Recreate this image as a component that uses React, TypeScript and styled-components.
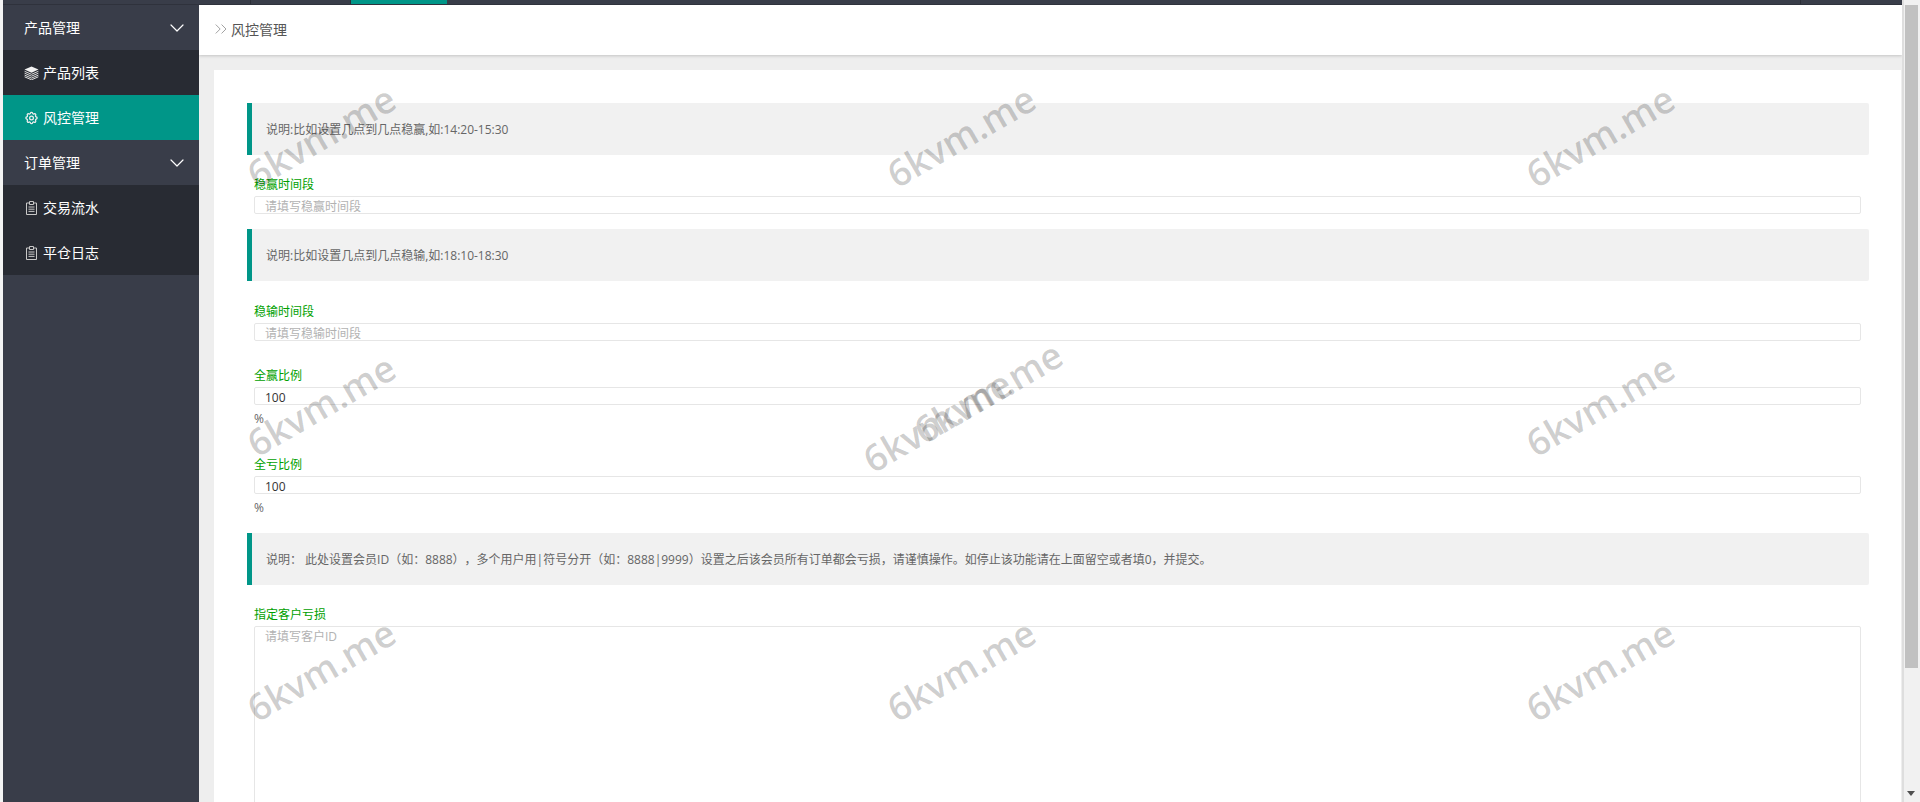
import React from "react"
import styled, { createGlobalStyle } from "styled-components"
import { ChevronDown, ChevronsRight } from "lucide-react"
import { HiOutlineCog } from "react-icons/hi"

const uiFont = `"Open Sans", "Noto Sans CJK SC", "Liberation Sans", sans-serif`

const GlobalStyle = createGlobalStyle`
  html, body {
    margin: 0;
    padding: 0;
    height: 100%;
    overflow: hidden;
    background: #fff;
    font-family: ${uiFont};
  }
  * { box-sizing: border-box; }
`

const Shell = styled.div`
  display: flex;
  height: 100vh;
  padding-left: 3px;
  background: #f4f4f4;
  position: relative;
  overflow: hidden;
`

const Frame = styled.div`
  flex: 1;
  min-width: 0;
  display: flex;
  flex-direction: column;
`

const TopStrip = styled.div`
  height: 5px;
  flex: none;
  display: flex;
  background: #393d49;
  border-bottom: 1px solid #2f323c;
`

const StripTab = styled.div<{ $w: number; $active?: boolean }>`
  width: ${(p) => p.$w}px;
  flex: none;
  background: ${(p) => (p.$active ? "#009688" : "transparent")};
  border-right: ${(p) => (p.$active ? "none" : "1px solid #2b2e37")};
`

const Body = styled.div`
  flex: 1;
  min-height: 0;
  display: flex;
`

const Sidebar = styled.nav`
  width: 196px;
  flex: none;
  background: #393d49;
`

const NavItem = styled.div<{ $child?: boolean; $active?: boolean }>`
  height: 45px;
  display: flex;
  align-items: center;
  gap: 4px;
  padding: 0 10px 0 21px;
  font-size: 14px;
  color: #fff;
  background: ${(p) => (p.$active ? "#009688" : p.$child ? "#282b33" : "transparent")};
`

const NavLabel = styled.span`
  flex: 1;
  margin-bottom: 2px;
`

const NavIcon = styled.span`
  width: 15px;
  height: 15px;
  flex: none;
  display: flex;
  align-items: center;
  justify-content: center;
  color: #eeeeee;
`

const Main = styled.main`
  flex: 1;
  min-width: 0;
  background: #eeeeee;
  display: flex;
  flex-direction: column;
  overflow: hidden;
`

const Crumb = styled.div`
  height: 50px;
  flex: none;
  display: flex;
  align-items: center;
  padding: 0 0 2px 12px;
  background: #fff;
  font-size: 14px;
  color: #555;
  box-shadow: 0 1px 3px rgba(0, 0, 0, 0.18);
`

const Card = styled.section`
  flex: 1;
  margin: 15px 1px 0 15px;
  padding: 33px 32px 0 33px;
  background: #fff;
  overflow: hidden;
`

const Note = styled.div<{ $top?: number }>`
  height: 52px;
  margin-top: ${(p) => p.$top ?? 0}px;
  display: flex;
  align-items: center;
  padding-left: 14px;
  background: #f1f1f1;
  border-left: 5px solid #009688;
  border-radius: 0 2px 2px 0;
  font-size: 12px;
  color: #666;
  white-space: nowrap;
  text-spacing-trim: space-all;
`

const Field = styled.div<{ $top: number }>`
  margin: ${(p) => p.$top}px 8px 0 7px;
`

const Label = styled.label`
  display: block;
  height: 18px;
  padding-top: 1px;
  line-height: 18px;
  margin-bottom: 3px;
  font-size: 12px;
  color: #009f00;
`

const TextInput = styled.input`
  display: block;
  width: 100%;
  height: 18px;
  padding: 2px 10px 0;
  border: 1px solid #e6e6e6;
  border-radius: 2px;
  outline: none;
  background: #fff;
  font: 12px/15px ${uiFont};
  color: #333;

  &::placeholder {
    color: #b2b2b2;
  }
`

const TextArea = styled.textarea`
  display: block;
  width: 100%;
  height: 300px;
  padding: 1px 10px 0;
  border: 1px solid #e6e6e6;
  border-radius: 2px;
  outline: none;
  resize: none;
  font: 12px/18px ${uiFont};
  color: #333;

  &::placeholder {
    color: #b2b2b2;
  }
`

const Unit = styled.div`
  height: 18px;
  margin-top: 4px;
  padding-top: 1px;
  line-height: 18px;
  font-size: 12px;
  color: #666;
`

const ScrollTrack = styled.div`
  width: 18px;
  flex: none;
  display: flex;
  flex-direction: column;
  padding: 5px 2px 5px 1px;
  background: #f1f1f1;
  border-left: 2px solid #dedede;
`

const ScrollThumb = styled.div`
  width: 13px;
  height: 663px;
  background: #c1c1c1;
`

const ScrollArrow = styled.div`
  margin: auto 0 1px 2px;
  width: 0;
  height: 0;
  border-left: 4px solid transparent;
  border-right: 4px solid transparent;
  border-top: 5px solid #505050;
`

// x/y are the centre of the rotated text
const Mark = styled.div<{ $x: number; $y: number }>`
  position: absolute;
  left: ${(p) => p.$x}px;
  top: ${(p) => p.$y}px;
  font: 600 37px/44px "Open Sans", "Liberation Sans", sans-serif;
  color: rgba(0, 0, 0, 0.2);
  white-space: nowrap;
  pointer-events: none;
  transform: translate(-50%, -50%) rotate(-30deg);
`

const LayersIcon = () => (
  <svg width="15" height="14" viewBox="0 0 15 14" fill="none">
    <path d="M7.5 0.5 14.5 3.6 7.5 6.7 0.5 3.6Z" fill="#f2f2f2" />
    <path
      d="M0.6 5.3 7.5 8.3 14.4 5.3M0.6 7.2 7.5 10.2 14.4 7.2M0.6 9.1 7.5 12.1 14.4 9.1M0.6 10.8 7.5 13.8 14.4 10.8"
      stroke="#dcdcdc"
    />
  </svg>
)

const ClipIcon = () => (
  <svg width="13" height="14" viewBox="0 0 13 14" fill="none" stroke="#c8c8c8">
    <path d="M4 2H1.5V13.5H11.5V2H9" />
    <path d="M4.5 0.5H8.5V3.5H4.5Z" />
    <path d="M3.5 6H9.5M3.5 8.2H9.5M3.5 10.4H9.5" />
  </svg>
)

const marks = [
  { x: 321, y: 136 },
  { x: 961, y: 136 },
  { x: 1600, y: 136 },
  { x: 321, y: 405 },
  { x: 937, y: 421 },
  { x: 988, y: 392 },
  { x: 1600, y: 405 },
  { x: 321, y: 670 },
  { x: 961, y: 670 },
  { x: 1600, y: 670 },
]

export default function App() {
  return (
    <>
      <GlobalStyle />
      <Shell>
        <Frame>
          <TopStrip>
            <StripTab $w={248} />
            <StripTab $w={100} />
            <StripTab $w={96} $active />
            <StripTab $w={1354} />
          </TopStrip>
          <Body>
            <Sidebar>
              <NavItem>
                <NavLabel>产品管理</NavLabel>
                <ChevronDown size={24} strokeWidth={1.2} />
              </NavItem>
              <NavItem $child>
                <NavIcon><LayersIcon /></NavIcon>
                <NavLabel>产品列表</NavLabel>
              </NavItem>
              <NavItem $child $active>
                <NavIcon><HiOutlineCog size={18} /></NavIcon>
                <NavLabel>风控管理</NavLabel>
              </NavItem>
              <NavItem>
                <NavLabel>订单管理</NavLabel>
                <ChevronDown size={24} strokeWidth={1.2} />
              </NavItem>
              <NavItem $child>
                <NavIcon><ClipIcon /></NavIcon>
                <NavLabel>交易流水</NavLabel>
              </NavItem>
              <NavItem $child>
                <NavIcon><ClipIcon /></NavIcon>
                <NavLabel>平仓日志</NavLabel>
              </NavItem>
            </Sidebar>
            <Main>
              <Crumb>
                <ChevronsRight size={20} strokeWidth={1.1} color="#999" />
                风控管理
              </Crumb>
              <Card>
                <Note>说明:比如设置几点到几点稳赢,如:14:20-15:30</Note>
                <Field $top={20}>
                  <Label>稳赢时间段</Label>
                  <TextInput placeholder="请填写稳赢时间段" />
                </Field>
                <Note $top={15}>说明:比如设置几点到几点稳输,如:18:10-18:30</Note>
                <Field $top={21}>
                  <Label>稳输时间段</Label>
                  <TextInput placeholder="请填写稳输时间段" />
                </Field>
                <Field $top={25}>
                  <Label>全赢比例</Label>
                  <TextInput defaultValue="100" />
                  <Unit>%</Unit>
                </Field>
                <Field $top={28}>
                  <Label>全亏比例</Label>
                  <TextInput defaultValue="100" />
                  <Unit>%</Unit>
                </Field>
                <Note $top={17}>说明： 此处设置会员ID（如：8888），多个用户用|符号分开（如：8888|9999）设置之后该会员所有订单都会亏损，请谨慎操作。如停止该功能请在上面留空或者填0，并提交。</Note>
                <Field $top={20}>
                  <Label>指定客户亏损</Label>
                  <TextArea placeholder="请填写客户ID" />
                </Field>
              </Card>
            </Main>
          </Body>
        </Frame>
        <ScrollTrack>
          <ScrollThumb />
          <ScrollArrow />
        </ScrollTrack>
        {marks.map((m) => (
          <Mark key={`${m.x}-${m.y}`} $x={m.x} $y={m.y}>6kvm.me</Mark>
        ))}
      </Shell>
    </>
  )
}
